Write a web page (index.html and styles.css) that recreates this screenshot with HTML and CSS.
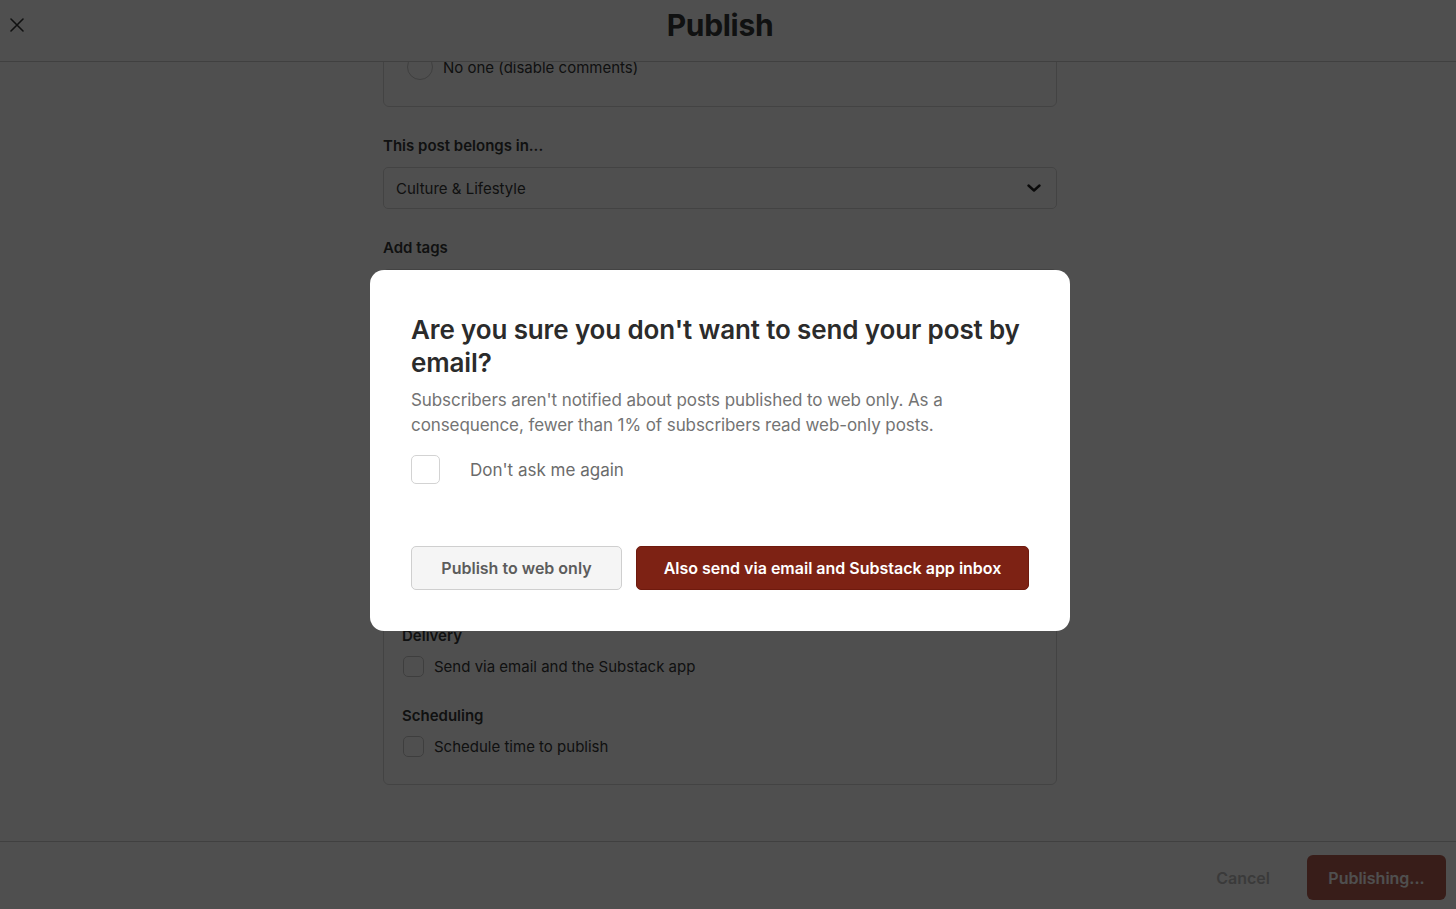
FILE: index.html
```html
<!DOCTYPE html>
<html lang="en">
<head>
    <meta charset="UTF-8">
    <meta name="viewport" content="width=device-width, initial-scale=1.0">
    <title>Publish</title>
    <link rel="stylesheet" href="styles.css">
</head>
<body>
    <header class="topbar">
        <button class="close-btn" aria-label="Close">
            <svg width="14" height="14" viewBox="0 0 14 14" fill="none" stroke="currentColor" stroke-width="1.6" stroke-linecap="round">
                <path d="M1 1 L13 13 M13 1 L1 13"/>
            </svg>
        </button>
        <h1 class="topbar-title">Publish</h1>
        <span></span>
    </header>

    <div class="scroller">
        <div class="column">
            <div class="card comments-card">
                <label class="radio-row">
                    <span class="radio"></span>
                    No one (disable comments)
                </label>
            </div>

            <div class="field-label">This post belongs in...</div>
            <div class="select">
                <span>Culture &amp; Lifestyle</span>
                <svg width="14" height="8" viewBox="0 0 14 8" fill="none" stroke="currentColor" stroke-width="2.4" stroke-linecap="round" stroke-linejoin="round">
                    <path d="M1.5 1.5 L7 6.5 L12.5 1.5"/>
                </svg>
            </div>

            <div class="field-label">Add tags</div>
            <div class="select"><span class="placeholder">Add a tag...</span></div>

            <div class="field-label">Audience</div>
            <div class="select"><span>Everyone</span></div>

            <div class="field-label">Social preview</div>
            <div class="textarea"></div>

            <div class="card delivery-card">
                <div class="group-label">Delivery</div>
                <label class="check-row">
                    <span class="checkbox"></span>
                    Send via email and the Substack app
                </label>
                <div class="group-label group-gap">Scheduling</div>
                <label class="check-row">
                    <span class="checkbox"></span>
                    Schedule time to publish
                </label>
            </div>
        </div>
    </div>

    <footer class="bottombar">
        <button class="cancel-btn">Cancel</button>
        <button class="publishing-btn">Publishing...</button>
    </footer>

    <div class="backdrop">
        <div class="modal">
            <h2 class="modal-title">Are you sure you don't want to send your post by email?</h2>
            <p class="modal-text">Subscribers aren't notified about posts published to web only. As a consequence, fewer than 1% of subscribers read web-only posts.</p>
            <label class="modal-check">
                <span class="modal-checkbox"></span>
                Don't ask me again
            </label>
            <div class="modal-actions">
                <button class="btn-secondary">Publish to web only</button>
                <button class="btn-primary">Also send via email and Substack app inbox</button>
            </div>
        </div>
    </div>
</body>
</html>
```

FILE: styles.css
```css
body {
    font-family: Inter, "Noto Sans", sans-serif;
    background-color: #fff;
    color: #363737;
    margin: 0;
    height: 100vh;
    display: flex;
    flex-direction: column;
    overflow: hidden;
}
button {
    font-family: inherit;
    cursor: pointer;
}
.topbar {
    display: grid;
    grid-template-columns: 1fr auto 1fr;
    align-items: center;
    height: 50px;
    padding: 0 16px 11px 0;
    border-bottom: 1px solid #cfcfcf;
    flex-shrink: 0;
    background-color: #fff;
    position: relative;
    z-index: 1;
}
.close-btn {
    justify-self: start;
    margin-left: 4px;
    padding: 6px;
    background: none;
    border: none;
    color: #363737;
    display: flex;
}
.topbar-title {
    margin: 0;
    font-size: 30px;
    font-weight: 700;
    letter-spacing: -0.01em;
    line-height: 50px;
}
.scroller {
    flex: 1;
    overflow: hidden;
    padding-right: 16px;
}
.column {
    width: 674px;
    margin: -39px auto 0;
}
.card {
    border: 1px solid #d9d9d9;
    border-radius: 6px;
}
.comments-card {
    padding: 30px 23px 26px;
}
.radio-row, .check-row {
    display: flex;
    align-items: center;
    gap: 10px;
    font-size: 15px;
}
.radio {
    width: 24px;
    height: 24px;
    border: 1px solid #c9c9c9;
    border-radius: 50%;
}
.field-label {
    font-size: 15px;
    font-weight: 600;
    line-height: 20px;
    margin-top: 29px;
}
.select {
    margin-top: 11px;
    height: 40px;
    border: 1px solid #d9d9d9;
    border-radius: 5px;
    display: flex;
    align-items: center;
    justify-content: space-between;
    padding: 0 15px 0 12px;
    font-size: 15px;
}
.select svg {
    color: #222;
}
.placeholder {
    color: #999;
}
.textarea {
    margin-top: 11px;
    height: 108px;
    border: 1px solid #d9d9d9;
    border-radius: 5px;
}
.delivery-card {
    margin-top: 24px;
    padding: 18px 18px 27px;
}
.group-label {
    font-size: 15px;
    font-weight: 600;
    line-height: 20px;
    margin-bottom: 10px;
}
.group-gap {
    margin-top: 29px;
    margin-bottom: 10px;
}
.check-row {
    padding-left: 1px;
    height: 21px;
}
.checkbox {
    width: 19px;
    height: 19px;
    border: 1px solid #c9c9c9;
    border-radius: 5px;
}
.bottombar {
    flex-shrink: 0;
    height: 45px;
    padding: 13px 10px 9px;
    border-top: 1px solid #cfcfcf;
    display: flex;
    justify-content: flex-end;
    align-items: center;
    gap: 19px;
}
.cancel-btn {
    background: none;
    border: none;
    padding: 0 18px;
    font-size: 16px;
    font-weight: 600;
    color: #bcbcbc;
}
.publishing-btn {
    width: 139px;
    height: 45px;
    border: none;
    border-radius: 6px;
    background-color: #b55e52;
    color: #fff;
    font-size: 16px;
    font-weight: 600;
}
.backdrop {
    position: fixed;
    inset: 0;
    background-color: rgba(0, 0, 0, 0.69);
    display: flex;
    align-items: center;
    justify-content: center;
    padding: 0 16px 8px 0;
    z-index: 10;
}
.modal {
    width: 700px;
    box-sizing: border-box;
    background-color: #fff;
    border-radius: 14px;
    padding: 43px 41px 41px;
}
.modal-title {
    margin: 0;
    font-size: 26px;
    font-weight: 600;
    line-height: 33px;
    letter-spacing: -0.005em;
    color: #2b2b2b;
}
.modal-text {
    margin: 9px 0 0;
    font-size: 17px;
    line-height: 25px;
    letter-spacing: -0.005em;
    color: #737373;
}
.modal-check {
    margin-top: 17px;
    display: flex;
    align-items: center;
    gap: 30px;
    font-size: 17px;
    color: #6b6b6b;
}
.modal-checkbox {
    width: 27px;
    height: 27px;
    border: 1px solid #d3d3d3;
    border-radius: 5px;
}
.modal-actions {
    margin-top: 62px;
    display: flex;
    gap: 14px;
}
.btn-secondary, .btn-primary {
    height: 44px;
    border-radius: 5px;
    font-size: 16px;
    font-weight: 600;
}
.btn-secondary {
    flex: 0 0 211px;
    background-color: #f5f5f5;
    border: 1px solid #cfcfcf;
    color: #5c5c5c;
}
.btn-primary {
    flex: 1;
    background-color: #7d2214;
    border: 1px solid #6e1a0e;
    color: #fff;
}
```
